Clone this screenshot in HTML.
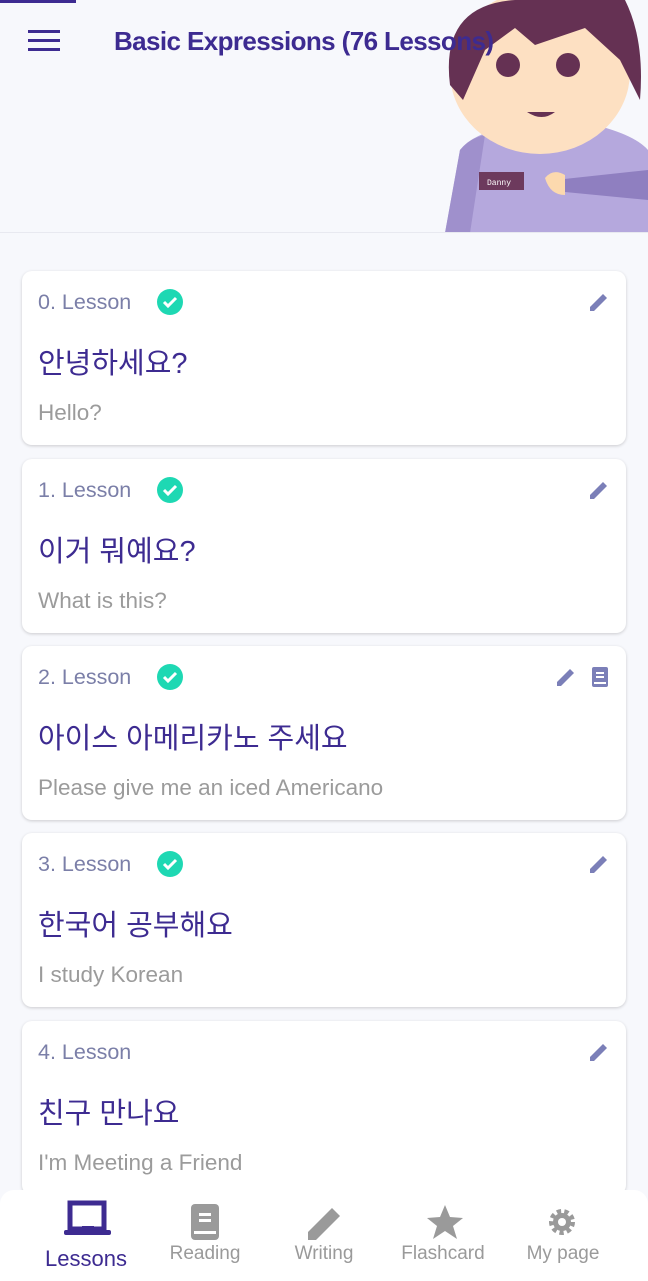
<!DOCTYPE html>
<html><head><meta charset="utf-8"><style>
*{margin:0;padding:0;box-sizing:border-box}
body{width:648px;height:1281px;background:#f7f8fc;font-family:"Liberation Sans","Noto Sans CJK KR",sans-serif;position:relative;overflow:hidden}
.hdr{position:absolute;left:0;top:0;width:648px;height:233px;background:#f7f8fc;border-bottom:1px solid #e8e9f0;overflow:hidden}
.bar{position:absolute;left:0;top:0;width:76px;height:3px;background:#3d2b91}
.title{position:absolute;left:114px;top:26px;font-size:26px;font-weight:bold;color:#3d2b91;letter-spacing:-0.6px}
.card{position:absolute;left:22px;width:604px;height:174px;background:#fff;border-radius:10px;box-shadow:0 1px 3px rgba(0,0,0,.18)}
.les{position:absolute;left:16px;top:19px;font-size:21.5px;color:#7b7fa8}
.chk{position:absolute;left:134px;top:17px}
.ko{position:absolute;left:16px;top:69px;font-size:29px;color:#3d2b91}
.en{position:absolute;left:16px;top:129px;font-size:22.5px;color:#9b9b9b}
.ic{position:absolute;top:20px}
.nav{position:absolute;left:0;top:1190px;width:648px;height:91px;background:#fff;border-radius:14px 14px 0 0}
.nav div{position:absolute;text-align:center;font-size:19px;color:#9a9a9a;width:120px}
</style></head><body>
<div class="hdr"><div class="bar"></div>
<svg style="position:absolute;left:28px;top:30px" width="32" height="22"><rect y="0" width="32" height="3" fill="#3d2b91"/><rect y="9" width="32" height="3" fill="#3d2b91"/><rect y="18" width="32" height="3" fill="#3d2b91"/></svg>
<svg style="position:absolute;left:415px;top:0" width="233" height="233">
<path d="M30 233 L45 150 Q60 130 110 125 L180 125 Q220 135 233 150 L233 233Z" fill="#b5a8dd"/>
<path d="M30 233 L45 150 Q55 138 70 135 L55 233Z" fill="#9f90cc"/>
<path d="M140 180 L233 170 L233 200 L150 192Z" fill="#8f7fc0"/>
<ellipse cx="125" cy="72" rx="90" ry="82" fill="#fde0c2"/>
<path d="M35 85 Q25 5 100 0 L210 0 Q230 40 225 100 L205 60 L170 28 L120 45 L100 28 L70 50 L48 100Z" fill="#653153"/>
<circle cx="93" cy="65" r="12" fill="#653153"/><circle cx="153" cy="65" r="12" fill="#653153"/>
<path d="M112 112 Q127 122 140 112Z" fill="#653153"/>
<rect x="64" y="172" width="45" height="18" fill="#6d3a5d"/><text x="72" y="185" font-size="8" fill="#fff" font-family="Liberation Mono">Danny</text>
<path d="M130 178 Q138 168 150 175 L150 195 Q135 195 130 178Z" fill="#fcd9ae"/>
</svg>
<div class="title">Basic Expressions (76 Lessons)</div>
</div>

<div class="card" style="top:271px"><div class="les">0. Lesson</div><svg class="chk" width="28" height="28"><circle cx="14" cy="14" r="13" fill="#1ed8b3"/><path d="M8 14l4 4 8-8" stroke="#fff" stroke-width="3" fill="none"/></svg><svg class="ic" style="left:566px" width="22" height="22"><path d="M2 20v-4L15 3l4 4L6 20z" fill="#7b7fb8"/></svg><div class="ko">안녕하세요?</div><div class="en">Hello?</div></div>
<div class="card" style="top:459px"><div class="les">1. Lesson</div><svg class="chk" width="28" height="28"><circle cx="14" cy="14" r="13" fill="#1ed8b3"/><path d="M8 14l4 4 8-8" stroke="#fff" stroke-width="3" fill="none"/></svg><svg class="ic" style="left:566px" width="22" height="22"><path d="M2 20v-4L15 3l4 4L6 20z" fill="#7b7fb8"/></svg><div class="ko">이거 뭐예요?</div><div class="en">What is this?</div></div>
<div class="card" style="top:646px"><div class="les">2. Lesson</div><svg class="chk" width="28" height="28"><circle cx="14" cy="14" r="13" fill="#1ed8b3"/><path d="M8 14l4 4 8-8" stroke="#fff" stroke-width="3" fill="none"/></svg><svg class="ic" style="left:533px" width="22" height="22"><path d="M2 20v-4L15 3l4 4L6 20z" fill="#7b7fb8"/></svg><svg class="ic" style="left:568px" width="20" height="22"><rect x="2" y="1" width="16" height="20" rx="2" fill="#7b7fb8"/><rect x="6" y="6" width="8" height="2" fill="#fff"/><rect x="6" y="10" width="8" height="2" fill="#fff"/><rect x="4" y="16" width="12" height="2" fill="#fff"/></svg><div class="ko">아이스 아메리카노 주세요</div><div class="en">Please give me an iced Americano</div></div>
<div class="card" style="top:833px"><div class="les">3. Lesson</div><svg class="chk" width="28" height="28"><circle cx="14" cy="14" r="13" fill="#1ed8b3"/><path d="M8 14l4 4 8-8" stroke="#fff" stroke-width="3" fill="none"/></svg><svg class="ic" style="left:566px" width="22" height="22"><path d="M2 20v-4L15 3l4 4L6 20z" fill="#7b7fb8"/></svg><div class="ko">한국어 공부해요</div><div class="en">I study Korean</div></div>
<div class="card" style="top:1021px"><div class="les">4. Lesson</div><svg class="ic" style="left:566px" width="22" height="22"><path d="M2 20v-4L15 3l4 4L6 20z" fill="#7b7fb8"/></svg><div class="ko">친구 만나요</div><div class="en">I'm Meeting a Friend</div></div>

<div class="nav">
<svg style="position:absolute;left:64px;top:10px" width="48" height="40"><path d="M6 3h34v26H6z" fill="none" stroke="#3d2b91" stroke-width="5"/><rect x="0" y="30" width="47" height="5" rx="2" fill="#3d2b91"/><rect x="18" y="26" width="12" height="6" fill="#3d2b91"/></svg>
<div style="left:26px;top:56px;color:#3d2b91;font-size:22px">Lessons</div>
<svg style="position:absolute;left:189px;top:13px" width="32" height="38"><rect x="2" y="1" width="28" height="36" rx="4" fill="#9a9a9a"/><rect x="10" y="10" width="12" height="3" fill="#fff"/><rect x="10" y="16" width="12" height="3" fill="#fff"/><rect x="5" y="28" width="22" height="3" fill="#fff"/></svg>
<div style="left:145px;top:53px">Reading</div>
<svg style="position:absolute;left:306px;top:14px" width="38" height="38"><path d="M2 36v-8L26 4l8 8L10 36z" fill="#9a9a9a"/></svg>
<div style="left:264px;top:53px">Writing</div>
<svg style="position:absolute;left:426px;top:14px" width="38" height="36"><path d="M19 1l5 12 13 1-10 8 4 13-12-8-12 8 4-13L1 14l13-1z" fill="#9a9a9a"/></svg>
<div style="left:383px;top:53px">Flashcard</div>
<svg style="position:absolute;left:547px;top:17px" width="30" height="30"><circle cx="15" cy="15" r="10" fill="none" stroke="#9a9a9a" stroke-width="6" stroke-dasharray="4 3"/><circle cx="15" cy="15" r="9" fill="#9a9a9a"/><circle cx="15" cy="15" r="4" fill="#fff"/></svg>
<div style="left:503px;top:53px">My page</div>
</div>
</body></html>
